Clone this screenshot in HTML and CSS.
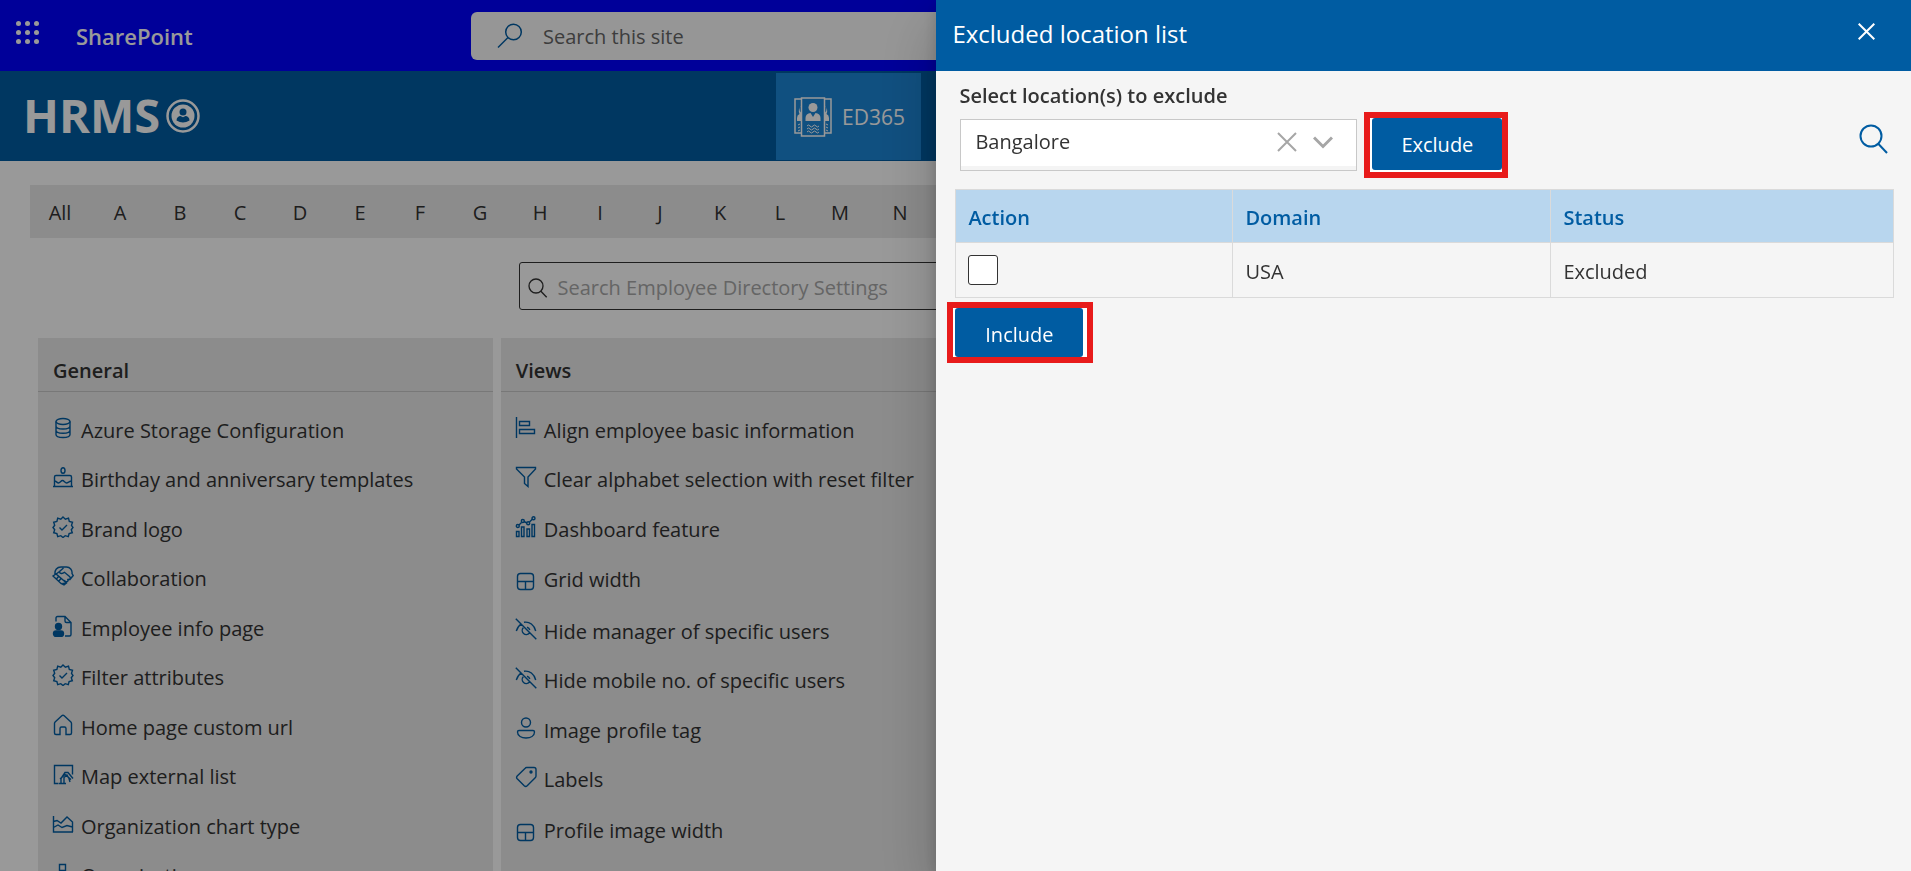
FILE: index.html
```html
<!DOCTYPE html>
<html lang="en">
<head>
<meta charset="utf-8">
<meta name="viewport" content="width=device-width, initial-scale=1">
<title>Employee Directory Settings</title>
<link rel="stylesheet" href="styles.css">
</head>
<body>
<svg class="sprite" aria-hidden="true">
  <symbol id="i-database" viewBox="0 0 22 22"><ellipse cx="11" cy="4.5" rx="7" ry="3"/><path d="M4 4.500v13c0 1.700 3.100 3 7 3s7-1.300 7-3v-13M4 9c0 1.700 3.100 3 7 3s7-1.300 7-3M4 13.300c0 1.700 3.100 3 7 3s7-1.300 7-3"/></symbol>
  <symbol id="i-cake" viewBox="0 0 22 22"><path d="M1 20.500h20M2.500 20.500V11q0-1.500 1.500-1.500h14q1.500 0 1.500 1.500v9.500M2.500 15c2 0 2.500 2 4 2s2.500-2.500 4-2.500 2.500 2.500 4 2.500 3-2 5-2"/><ellipse cx="11" cy="4.500" rx="2" ry="2.800"/></symbol>
  <symbol id="i-badge" viewBox="0 0 22 22"><path d="M11 1l2.400 2.200 3.100-1 .8 3.200 3.200.8-1 3.100L21 11.500l-1.700 2.200 1 3-3.200.9-.8 3.100-3.100-1L11 21.500l-2.200-1.800-3.100 1-.8-3.100-3.200-.9 1-3L1 11.500l1.700-2.200-1-3.100 3.200-.8.8-3.200 3.100 1z"/><path d="M7.500 11.500l2.500 2.500 5-5"/></symbol>
  <symbol id="i-hands" viewBox="0 0 22 22"><path d="M3 9.500C2.500 5 5 2 9 2h5.500C18 2 20.500 5 20 8.500l1.200 2-3.700 4.500M7.500 6.500L11.500 3M7.500 6.500c0 2.500 3 2.500 5 .8l5 4.200c2 2-.3 4-2 2.500 1.500 2-.5 3.500-2.200 2.200.5 2-1.300 3-2.800 1.800M7.500 6.500L3.500 9.500M1 11l3-2 10.500 9-2.500 2-3-1.500zM4 14.500l2.500-3M6.500 16.500l2.500-3"/></symbol>
  <symbol id="i-infopage" viewBox="0 0 22 22"><path d="M4 6.500V3q0-1.500 1.500-1.500H13l6 6v12q0 1.500-1.500 1.500H13M13 1.500v4.500q0 1.500 1.500 1.500H19"/><circle class="solid" cx="6.500" cy="11.500" r="3"/><rect class="solid" x="1.500" y="16" width="10" height="5.500" rx="2.700"/></symbol>
  <symbol id="i-home" viewBox="0 0 22 22"><path d="M2.500 9.500q0-.8.600-1.400l6.700-6.300q1.200-1 2.400 0l6.700 6.300q.6.600.6 1.400v9.500q0 1.500-1.500 1.500H14v-6q0-1.500-1.500-1.500h-3Q8 13 8 14.500v6H4q-1.500 0-1.500-1.500z"/></symbol>
  <symbol id="i-map" viewBox="0 0 22 22"><path d="M6.500 20.500h-4v-18h18v9M7 20.500h7M9 20.500v-5L13 9.500h3l5 6M12 20.500v-6l3-2.500 2 3.500 1 3.500M8 16l5-4.500 6 5"/></symbol>
  <symbol id="i-area" viewBox="0 0 22 22"><path d="M1.500 3v16H21M1.500 8.500l3.500-1 4 2.500 6-6 5.500 5v10M1.500 14.500L6 12l4 2.500 5-2 5.500 1.500"/></symbol>
  <symbol id="i-org" viewBox="0 0 22 22"><path d="M7.500 2.500h6v6h-6zM10.500 8.500v5M3.500 17v-5.500h14V17M1 17h5v4H1zM15 17h5v4h-5z"/></symbol>
  <symbol id="i-align" viewBox="0 0 22 22"><path d="M1.500 0v21M4.500 4.500h10v4h-10zM4.500 12.500h15v4h-15z"/></symbol>
  <symbol id="i-funnel" viewBox="0 0 22 22"><path d="M1.500 1.500h19v1.500L13 11v9.500l-3.500-3V11L1.500 3z"/></symbol>
  <symbol id="i-chart" viewBox="0 0 22 22"><path d="M1.500 15.500H4v5H1.500zM6.500 11H9v9.500H6.500zM12 13h2.500v7.500H12zM17 8.500h2.500v12H17zM4 9l2.500-2.500M9 5.500L12 7M14.500 6l3-3"/><circle cx="2.800" cy="10" r="1.500"/><circle cx="7.800" cy="5" r="1.500"/><circle cx="13.200" cy="7.200" r="1.500"/><circle cx="18.500" cy="2.200" r="1.500"/></symbol>
  <symbol id="i-grid" viewBox="0 0 22 22"><rect x="2.500" y="4.500" width="16" height="16" rx="3"/><path d="M2.500 12.500h16M10.500 12.500v8"/></symbol>
  <symbol id="i-hide" viewBox="0 0 22 22"><path d="M.8.800l20.500 20.500M1.300 13C2.300 9.500 4 7.300 6.300 5.800M9 4.300C14.500 3.300 19.300 7 20.700 13M8.300 9.800a4 4 0 1 0 6 5.500M12 9.200a4 4 0 0 1 2.800 2.800"/></symbol>
  <symbol id="i-person" viewBox="0 0 22 22"><circle cx="11" cy="5.500" r="4.500"/><path d="M4 13.500h14q1.500 0 1.500 1.500c0 4-4 6-8.500 6s-8.500-2-8.500-6q0-1.500 1.500-1.500z"/></symbol>
  <symbol id="i-tag" viewBox="0 0 22 22"><path d="M11.500 1.500H19q2 0 2 2V10q0 1-.8 1.800l-8 8q-1.500 1.300-3 0l-7-7q-1.200-1.300 0-2.800l8-7.800q.6-.7 1.300-.7z"/><circle class="solid" cx="16" cy="6" r="1"/></symbol>
  <symbol id="i-search" viewBox="0 0 30 30"><circle cx="12" cy="12" r="10.500"/><path d="M19 19.500l9 9.500"/></symbol>
</svg>

<div class="app">
  <header class="suite">
    <button class="waffle" type="button" aria-label="App launcher">
      <svg width="23" height="23" viewBox="0 0 23 23"><g fill="#fff"><circle cx="2.500" cy="2.500" r="2.500"/><circle cx="11.500" cy="2.500" r="2.500"/><circle cx="20.500" cy="2.500" r="2.500"/><circle cx="2.500" cy="11.500" r="2.500"/><circle cx="11.500" cy="11.500" r="2.500"/><circle cx="20.500" cy="11.500" r="2.500"/><circle cx="2.500" cy="20.500" r="2.500"/><circle cx="11.500" cy="20.500" r="2.500"/><circle cx="20.500" cy="20.500" r="2.500"/></g></svg>
    </button>
    <a class="brand" href="#">SharePoint</a>
    <label class="site-search">
      <svg class="line thin" width="26" height="26" viewBox="0 0 26 26"><circle cx="16.500" cy="9" r="7.800"/><path d="M11 14.500L1 24.500"/></svg>
      <input type="search" placeholder="Search this site" aria-label="Search this site">
    </label>
  </header>

  <div class="hrms">
    <a class="logo" href="#">HRMS
      <svg width="34" height="34" viewBox="0 0 34 34"><circle cx="17" cy="17" r="15.500" fill="none" stroke="#fff" stroke-width="2.500"/><circle cx="17" cy="17" r="11.500" fill="#fff"/><circle cx="17" cy="13" r="3.500" fill="#005ca2"/><path d="M10.500 21.500c0-3 2-4.500 4-4.500l2.500 1.200 2.500-1.200c2 0 4 1.500 4 4.500q-6.500 4-13 0z" fill="#005ca2"/></svg>
    </a>
    <a class="tile" href="#">
      <svg width="38" height="40" viewBox="0 0 38 40" fill="none" stroke="#fff"><path stroke-width="1.500" d="M7 2H1v34h6M31 2h6v34h-6M7.500 1h23v38h-23z"/><g fill="#fff" stroke="none"><circle cx="19" cy="10.500" r="4.500"/><path d="M11.500 24v-3c0-3 2-4.500 5-5l2.500 4 2.500-4c3 .500 5 2 5 5v3zM7 9c-2 1-2 5 0 6.500V24H3v-3q0-3 2.500-4Q3.500 12 7 9zM31 9c2 1 2 5 0 6.500V24h4v-3q0-3-2.500-4Q34.500 12 31 9z"/></g><path d="M13 29q1.500-2 3 0t3 0 3 0 3 0M13 32q1.500-2 3 0t3 0 3 0 3 0M13 35q1.500-2 3 0t3 0 3 0 3 0M4 28l2-1M4 31l2-1M4 34l2-1M32 27l2 1M32 30l2 1M32 33l2 1"/></svg>
      <span>ED365</span>
    </a>
  </div>

  <main class="content">
    <nav class="alphabet" aria-label="Filter by letter">
      <a href="#">All</a><a href="#">A</a><a href="#">B</a><a href="#">C</a><a href="#">D</a><a href="#">E</a><a href="#">F</a><a href="#">G</a><a href="#">H</a><a href="#">I</a><a href="#">J</a><a href="#">K</a><a href="#">L</a><a href="#">M</a><a href="#">N</a>
    </nav>
    <label class="settings-search">
      <svg class="line" width="20" height="20"><use href="#i-search"/></svg>
      <input type="search" placeholder="Search Employee Directory Settings" aria-label="Search Employee Directory Settings">
    </label>
    <div class="cards">
      <section class="card">
        <h2>General</h2>
        <ul>
          <li><a href="#"><svg class="ico"><use href="#i-database"/></svg>Azure Storage Configuration</a></li>
          <li><a href="#"><svg class="ico"><use href="#i-cake"/></svg>Birthday and anniversary templates</a></li>
          <li><a href="#"><svg class="ico"><use href="#i-badge"/></svg>Brand logo</a></li>
          <li><a href="#"><svg class="ico"><use href="#i-hands"/></svg>Collaboration</a></li>
          <li><a href="#"><svg class="ico"><use href="#i-infopage"/></svg>Employee info page</a></li>
          <li><a href="#"><svg class="ico"><use href="#i-badge"/></svg>Filter attributes</a></li>
          <li><a href="#"><svg class="ico"><use href="#i-home"/></svg>Home page custom url</a></li>
          <li><a href="#"><svg class="ico"><use href="#i-map"/></svg>Map external list</a></li>
          <li><a href="#"><svg class="ico"><use href="#i-area"/></svg>Organization chart type</a></li>
          <li><a href="#"><svg class="ico"><use href="#i-org"/></svg>Organization name</a></li>
        </ul>
      </section>
      <section class="card">
        <h2>Views</h2>
        <ul>
          <li><a href="#"><svg class="ico"><use href="#i-align"/></svg>Align employee basic information</a></li>
          <li><a href="#"><svg class="ico"><use href="#i-funnel"/></svg>Clear alphabet selection with reset filter</a></li>
          <li><a href="#"><svg class="ico"><use href="#i-chart"/></svg>Dashboard feature</a></li>
          <li class="roomy"><a href="#"><svg class="ico"><use href="#i-grid"/></svg>Grid width</a></li>
          <li><a href="#"><svg class="ico"><use href="#i-hide"/></svg>Hide manager of specific users</a></li>
          <li><a href="#"><svg class="ico"><use href="#i-hide"/></svg>Hide mobile no. of specific users</a></li>
          <li><a href="#"><svg class="ico"><use href="#i-person"/></svg>Image profile tag</a></li>
          <li><a href="#"><svg class="ico"><use href="#i-tag"/></svg>Labels</a></li>
          <li class="roomy"><a href="#"><svg class="ico"><use href="#i-grid"/></svg>Profile image width</a></li>
        </ul>
      </section>
    </div>
  </main>
</div>

<div class="overlay"></div>

<aside class="panel" role="dialog" aria-labelledby="panel-title">
  <header class="panel-head">
    <h1 id="panel-title">Excluded location list</h1>
    <button class="plain" type="button" aria-label="Close"><svg width="17" height="17" viewBox="0 0 17 17" stroke="#fff" stroke-width="2"><path d="M.7.700l15.600 15.600M16.300.7L.7 16.300"/></svg></button>
  </header>
  <div class="panel-body">
    <label class="field-label" for="location">Select location(s) to exclude</label>
    <div class="picker">
      <div class="combo">
        <select id="location"><option>Bangalore</option></select>
        <button class="plain" type="button" aria-label="Clear selection"><svg width="20" height="20" viewBox="0 0 20 20" stroke="#a6a6a6" stroke-width="2"><path d="M1 1l18 18M19 1L1 19"/></svg></button>
        <svg width="20" height="20" viewBox="0 0 20 20" fill="none" stroke="#a6a6a6" stroke-width="3"><path d="M1 5.500l9 9 9-9"/></svg>
      </div>
      <span class="marked marked-exclude"><button class="primary" type="button">Exclude</button></span>
      <button class="plain find" type="button" aria-label="Search"><svg class="line" width="30" height="30"><use href="#i-search"/></svg></button>
    </div>
    <table class="locations">
      <thead><tr><th class="c-action">Action</th><th class="c-domain">Domain</th><th>Status</th></tr></thead>
      <tbody><tr><td><input type="checkbox" aria-label="Select USA"></td><td>USA</td><td>Excluded</td></tr></tbody>
    </table>
    <span class="marked marked-include"><button class="primary" type="button">Include</button></span>
  </div>
</aside>
</body>
</html>
```

FILE: styles.css
```css
* { box-sizing: border-box; }

body {
  margin: 0;
  height: 100vh;
  overflow: hidden;
  background: #fff;
  color: #333;
  font: 20px/30px "Open Sans", "Noto Sans", sans-serif;
}

a { color: inherit; text-decoration: none; }
svg { flex: none; }
input, button, select { font: inherit; color: inherit; }
.sprite { position: absolute; width: 0; height: 0; }
.line { fill: none; stroke: #005ca2; stroke-width: 2; }
.thin { stroke-width: 1.5; }
.plain { display: flex; padding: 0; border: 0; background: none; }

/* Suite bar */
.suite {
  display: flex;
  align-items: center;
  height: 71px;
  padding: 0 16px;
  background: #0000ff;
}
.waffle { display: flex; width: 60px; padding: 0 0 6px; border: 0; background: none; }
.brand { flex: 1; color: #fff; font-size: 22px; font-weight: 600; }
.site-search {
  display: flex;
  align-items: center;
  gap: 20px;
  width: 969px;
  height: 48px;
  margin-right: 455px;
  padding: 0 26px;
  border-radius: 6px;
  background: #fafafa;
}
.site-search input {
  flex: 1;
  padding: 2px 0 0;
  border: 0;
  outline: 0;
  background: none;
}
.site-search input::placeholder { color: #666; }

/* Site header */
.hrms {
  display: flex;
  justify-content: space-between;
  height: 90px;
  padding: 2px 990px 1px 23px;
  background: #005ca2;
}
.logo {
  display: flex;
  align-items: center;
  gap: 6px;
  padding-bottom: 2px;
  color: #fff;
  font-size: 47px;
  font-weight: 700;
  line-height: 1;
}
.tile {
  display: flex;
  align-items: center;
  gap: 10px;
  padding: 0 16px 0 18px;
  background: #1c85d5;
  color: #fff;
  font-size: 21px;
}

/* Settings */
.content { padding: 24px 30px 0; }
.alphabet { display: flex; height: 53px; background: #e9e9e9; }
.alphabet a { width: 60px; line-height: 55px; text-align: center; }
.settings-search {
  display: flex;
  align-items: center;
  gap: 10px;
  width: 874px;
  height: 48px;
  margin: 24px auto 28px;
  padding: 4px 8px 0;
  border: 1px solid #333;
  border-radius: 3px;
}
.settings-search .line { stroke: #333; }
.settings-search input { flex: 1; padding: 0; border: 0; outline: 0; background: none; }
.settings-search input::placeholder { color: #a9a9a9; }
.cards {
  display: grid;
  grid-template-columns: repeat(4, 1fr);
  gap: 8px;
  padding-left: 8px;
}
.card { background: #e9e9e9; }
.card h2 {
  margin: 0;
  padding: 12px 15px 0;
  border-bottom: 1px solid #c8c8c8;
  font-size: 20px;
  font-weight: 600;
  line-height: 41px;
}
.card ul { margin: 0; padding: 14px 14px; list-style: none; }
.card li a { display: flex; align-items: center; gap: 7px; padding: 10px 0 9px; }
.card li:nth-child(even) a { padding-bottom: 10px; }
.card .roomy a { padding-top: 11px; }
.card .roomy:nth-child(even) a { padding-bottom: 12px; }
.ico {
  width: 22px;
  height: 22px;
  margin-bottom: 6px;
  fill: none;
  stroke: #005ca2;
  stroke-width: 1.4;
}
.roomy .ico { margin-bottom: 0; }
.solid { fill: #005ca2; }

/* Dimmed layer and side panel lie over the page */
.overlay { position: fixed; inset: 0; background: rgba(0, 0, 0, .4); }
.panel {
  position: fixed;
  top: 0;
  right: 0;
  bottom: 0;
  width: 51%;
  background: #f5f5f5;
  box-shadow: 0 26px 58px rgba(0, 0, 0, .22), 0 5px 14px rgba(0, 0, 0, .18);
}
.panel-head {
  display: flex;
  align-items: center;
  justify-content: space-between;
  height: 71px;
  padding: 0 36px 4px 16px;
  background: #005ca2;
  color: #fff;
}
.panel-head h1 { margin: 0; font-size: 24px; font-weight: 400; }
.panel-head .plain { padding-bottom: 4px; }
.panel-body { padding: 8px 17px 0 19px; }
.field-label { display: block; padding-left: 4px; font-weight: 600; line-height: 33px; }
.picker { display: flex; align-items: center; padding-left: 5px; }
.combo {
  display: flex;
  align-items: center;
  gap: 16px;
  width: 397px;
  height: 52px;
  padding: 0 23px 7px 14px;
  border: 1px solid #c8c8c8;
  background: linear-gradient(#fff 46px, #f4f4f4 46px);
}
.combo select {
  flex: 1;
  padding: 0;
  border: 0;
  outline: 0;
  background: none;
  appearance: none;
}
.marked { display: flex; border: 6px solid #e81b1b; background: #fff; }
.marked-exclude { margin-left: 7px; padding: 0 0 2px 2px; }
.marked-include { width: 146px; margin: 4px 0 0 -8px; padding: 0 4px 0 2px; }
.primary {
  width: 130px;
  height: 52px;
  padding: 1px 0 0;
  border: 0;
  border-radius: 3px;
  background: #005ca2;
  color: #fff;
}
.marked-include .primary { width: 128px; height: 49px; padding-top: 4px; }
.find { margin: 0 5px 0 auto; padding-bottom: 12px; }

.locations {
  width: 100%;
  margin-top: 11px;
  border-collapse: collapse;
  table-layout: fixed;
}
.locations th, .locations td {
  height: 53px;
  padding: 3px 12px 0;
  border: 1px solid #dadada;
  text-align: left;
}
.locations th { background: #b8d6ee; color: #005ca2; font-weight: 600; }
.locations td { height: 55px; }
.locations td:first-child { padding-top: 0; }
.c-action { width: 277px; }
.c-domain { width: 318px; }
.locations input {
  display: block;
  width: 30px;
  height: 30px;
  margin: 0;
  border: 1px solid #333;
  border-radius: 3px;
  background: #fff;
  appearance: none;
}
```
